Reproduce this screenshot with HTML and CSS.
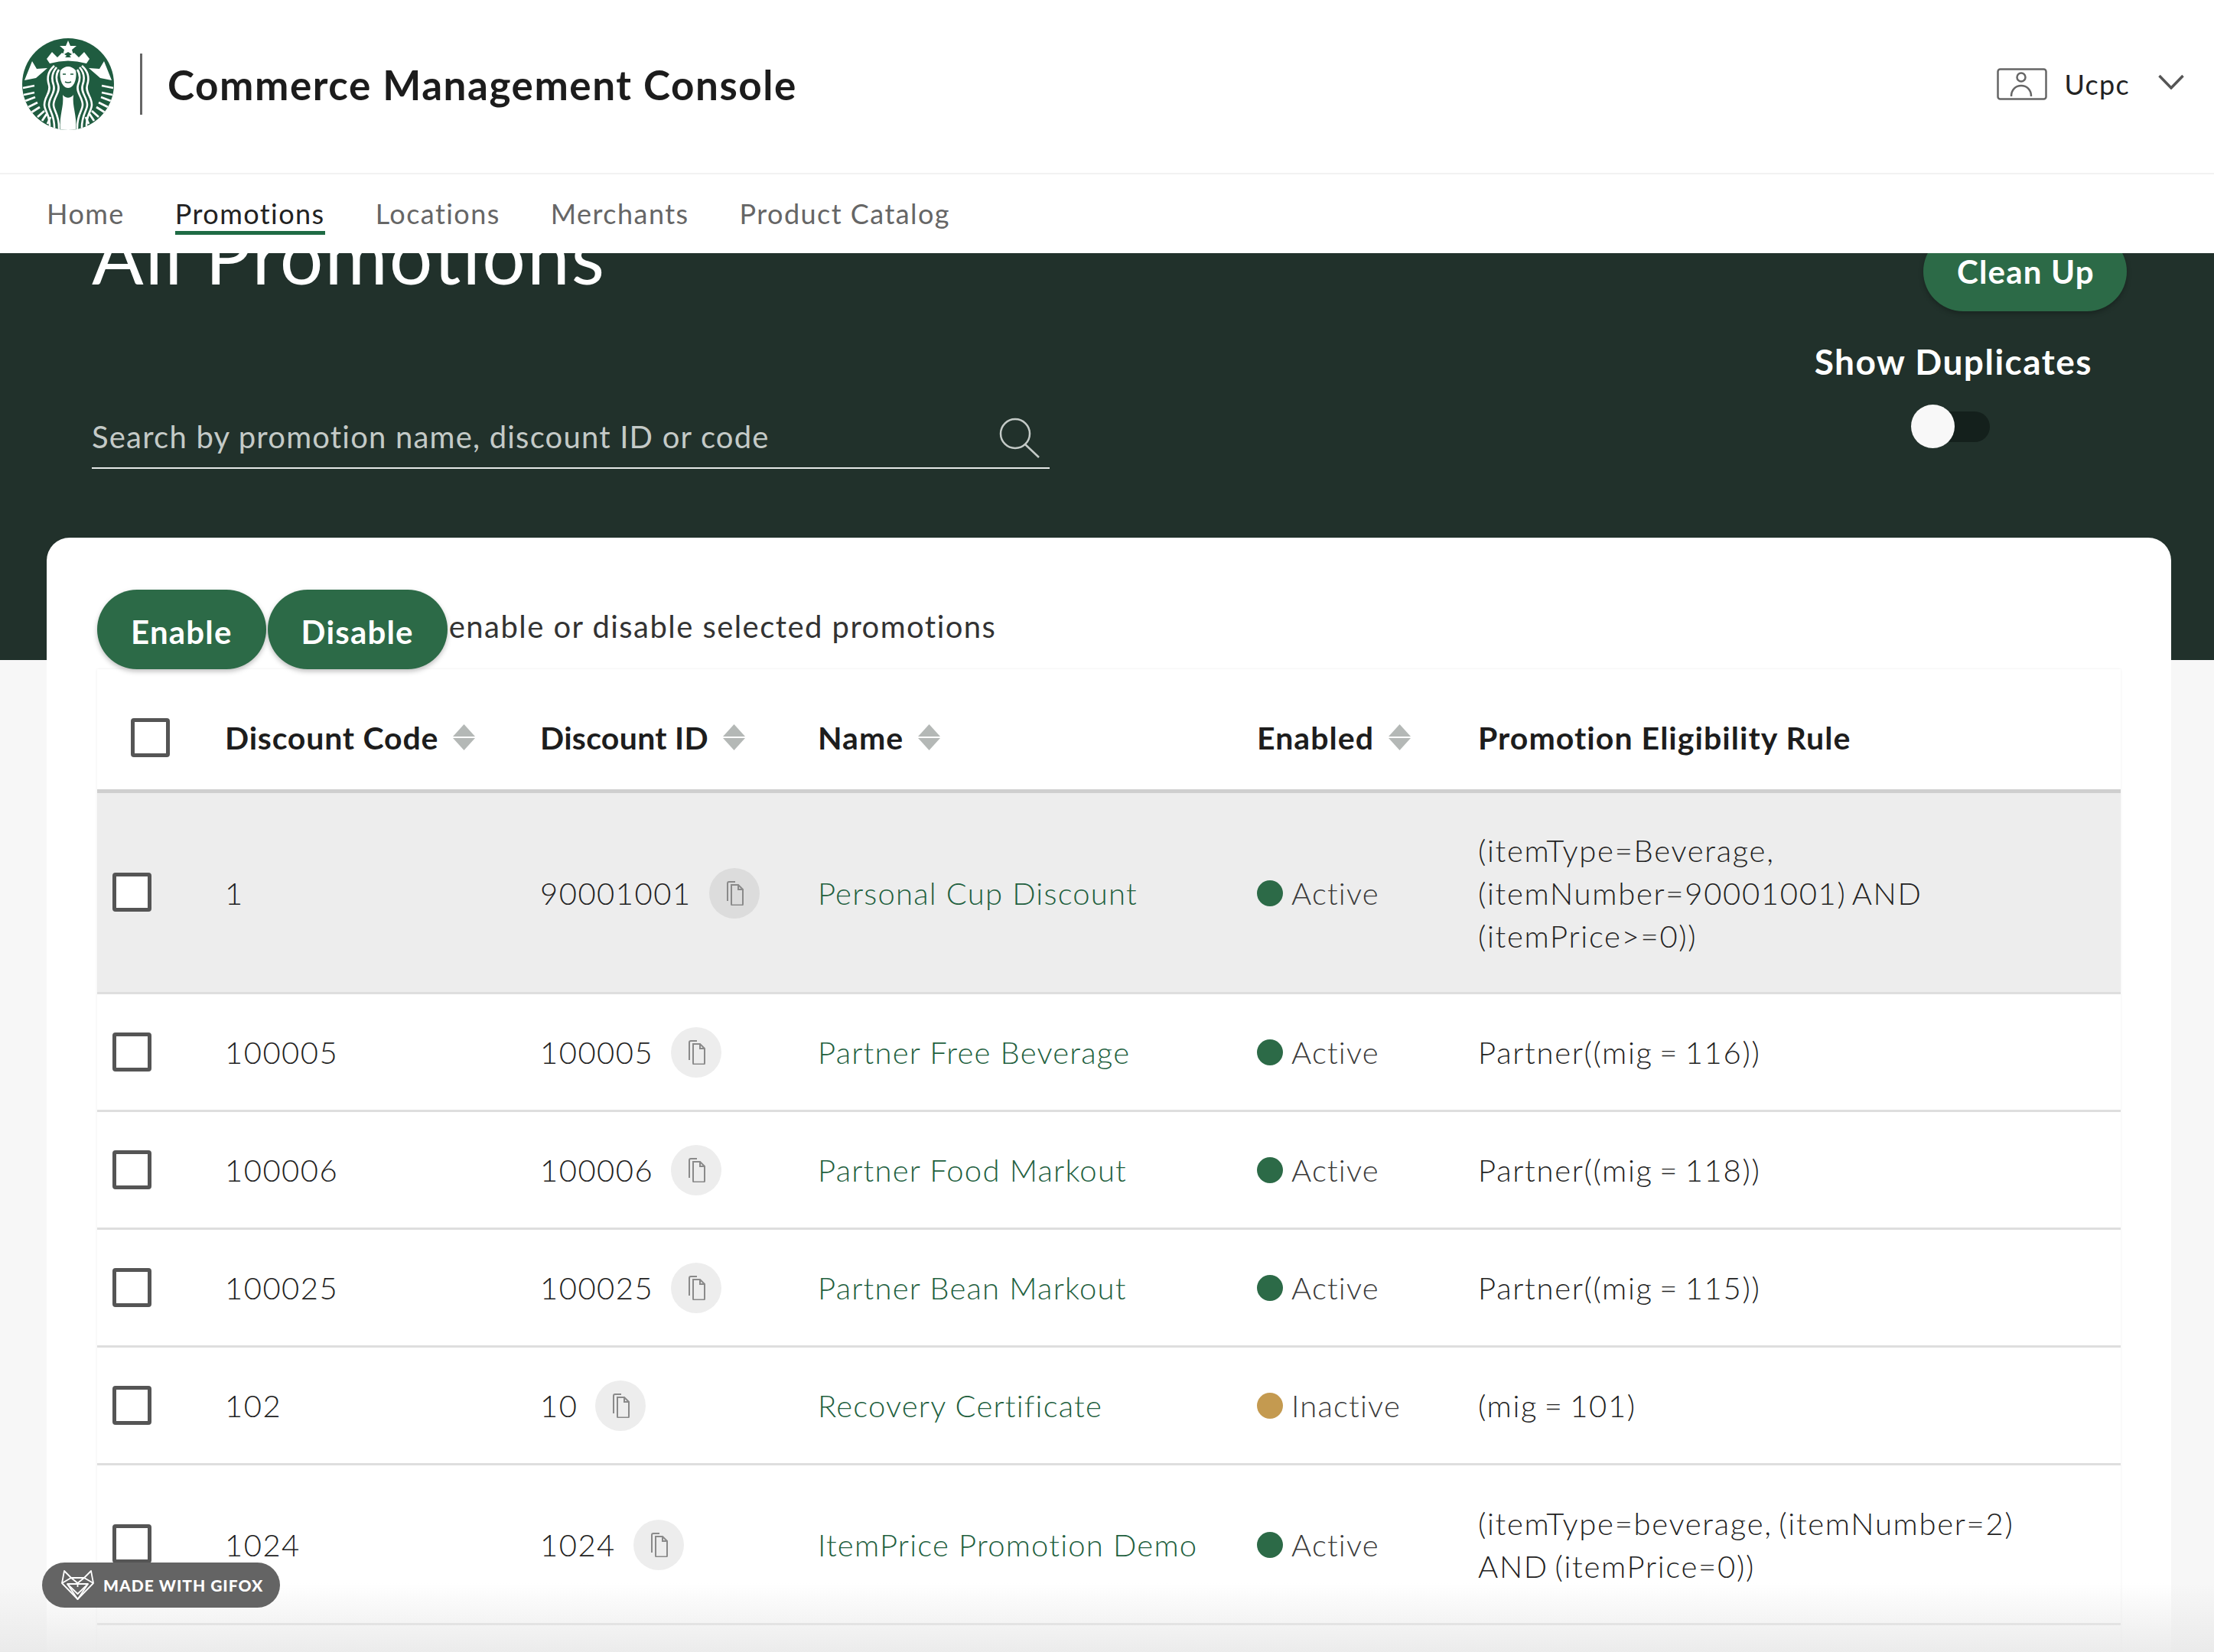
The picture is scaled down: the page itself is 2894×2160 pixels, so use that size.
FILE: index.html
```html
<!DOCTYPE html>
<html lang="en">
<head>
    <meta charset="UTF-8">
    <title>Commerce Management Console</title>
    <link rel="stylesheet" href="styles.css">
</head>
<body>
    <svg class="defs" width="0" height="0">
        <defs>
            <symbol id="sort" viewBox="0 0 29 34">
                <polygon class="sort-up" points="14.5,0 29,16 0,16"/>
                <polygon class="sort-down" points="0,18 29,18 14.5,34"/>
            </symbol>
            <symbol id="copy" viewBox="0 0 24 32">
                <path d="M8 5h9l6 6v19a1.5 1.5 0 0 1-1.500 1.500H9.500A1.500 1.500 0 0 1 8 30z"/>
                <path d="M17 5v6h6"/>
                <path d="M3 26V3a2 2 0 0 1 2-2h8"/>
            </symbol>
        </defs>
    </svg>

    <div class="page">
        <header class="topbar">
            <div class="brand">
                <svg class="logo" viewBox="0 0 120 120">
                    <defs>
                        <clipPath id="logo-clip"><circle cx="60" cy="60" r="60"/></clipPath>
                        <g id="logo-half">
                            <polygon points="13,30 19,40 33,39 18,52 3,55" fill="#fff"/>
                            <g stroke="#fff" stroke-width="2.800" fill="none">
                                <path d="M1 65l15-3M2 74l14-3M4 82l13-5M8 90l12-6M12 97l11-7"/>
                                <path d="M20 103l9-8M26 108l6-9M33 112l4-9"/>
                            </g>
                            <g stroke="#fff" stroke-width="2.600" fill="none">
                                <path d="M42 36C34 43 32 52 35 61C38 71 29 76 29 87C29 95 37 100 36 118"/>
                                <path d="M45 38C39 45 38 53 41 61C44 71 35 77 35 87C35 95 43 100 42 120"/>
                                <path d="M48 41C44 47 44 54 47 61C50 71 41 77 41 87C41 95 49 100 48 120"/>
                            </g>
                        </g>
                    </defs>
                    <circle cx="60" cy="60" r="60" fill="#1f5c40"/>
                    <g clip-path="url(#logo-clip)">
                        <use href="#logo-half"/>
                        <use href="#logo-half" transform="matrix(-1 0 0 1 120 0)"/>
                        <polygon points="60,3 63,10 71,10 65,15 67,22 60,18 53,22 55,15 49,10 57,10" fill="#fff"/>
                        <path d="M32 27L39 18L46 25L52 19L60 24L68 19L74 25L81 18L88 27L84 33Q60 26 36 33Z" fill="#fff"/>
                        <polygon points="60,21 64,25 56,25" fill="#1f5c40"/>
                        <path d="M50 42Q60 32 70 42C72 52 68 65 60 65C52 65 48 52 50 42Z" fill="#fff"/>
                        <path d="M53 47h4M63 47h4M56 57q4 2 8 0" stroke="#1f5c40" stroke-width="1.500" fill="none"/>
                        <path d="M53 74C57 79 63 79 67 74C65 90 72 100 70 120L50 120C48 100 55 90 53 74Z" fill="#fff"/>
                    </g>
                </svg>
                <span class="brand-divider"></span>
                <span class="brand-title">Commerce Management Console</span>
            </div>
            <div class="user">
                <svg class="user-icon" viewBox="0 0 66 42" fill="none" stroke="#666" stroke-width="2.500">
                    <rect x="1.500" y="1.500" width="63" height="39" rx="3"/>
                    <circle cx="32" cy="12" r="5.500"/>
                    <path d="M19 37c0-9 6-14 13-14s13 5 13 14"/>
                </svg>
                <span class="user-name">Ucpc</span>
                <svg class="chevron" viewBox="0 0 34 20" fill="none" stroke="#555" stroke-width="3.500">
                    <path d="M1.500 2L17 18L32.500 2"/>
                </svg>
            </div>
        </header>

        <nav class="tabs">
            <a class="tab">Home</a>
            <a class="tab active">Promotions</a>
            <a class="tab">Locations</a>
            <a class="tab">Merchants</a>
            <a class="tab">Product Catalog</a>
        </nav>

        <section class="hero">
            <div class="hero-inner">
                <div class="hero-left">
                    <h1 class="hero-title">All Promotions</h1>
                    <div class="search">
                        <span class="search-text">Search by promotion name, discount ID or code</span>
                        <svg class="search-icon" viewBox="0 0 54 54" fill="none" stroke="#c4cac7" stroke-width="2.500">
                            <circle cx="21" cy="21" r="19"/>
                            <path d="M34 35L52 52"/>
                        </svg>
                    </div>
                </div>
                <div class="hero-right">
                    <button class="pill clean-up">Clean Up</button>
                    <div class="dup-label">Show Duplicates</div>
                    <div class="toggle"><span class="toggle-knob"></span></div>
                </div>
            </div>
        </section>

        <main class="card">
            <div class="actions">
                <button class="pill">Enable</button>
                <button class="pill">Disable</button>
                <span class="actions-text">enable or disable selected promotions</span>
            </div>

            <table class="promos">
                <colgroup>
                    <col class="col-check">
                    <col class="col-code">
                    <col class="col-id">
                    <col class="col-name">
                    <col class="col-status">
                    <col class="col-rule">
                </colgroup>
                <thead>
                    <tr>
                        <th class="th-check"><span class="checkbox"></span></th>
                        <th class="th-code">Discount Code<svg class="sort-icon sorted"><use href="#sort"/></svg></th>
                        <th class="th-id">Discount ID<svg class="sort-icon"><use href="#sort"/></svg></th>
                        <th>Name<svg class="sort-icon"><use href="#sort"/></svg></th>
                        <th>Enabled<svg class="sort-icon"><use href="#sort"/></svg></th>
                        <th>Promotion Eligibility Rule</th>
                    </tr>
                </thead>
                <tbody>
                    <tr class="hovered tall">
                        <td class="td-check"><span class="checkbox"></span></td>
                        <td class="num">1</td>
                        <td class="num"><div class="id-cell">90001001<span class="copy-btn"><svg class="copy-icon"><use href="#copy"/></svg></span></div></td>
                        <td><a class="promo-link">Personal Cup Discount</a></td>
                        <td><span class="status"><i class="dot"></i>Active</span></td>
                        <td class="rule">(itemType=Beverage, (itemNumber=90001001) AND (itemPrice&gt;=0))</td>
                    </tr>
                    <tr>
                        <td class="td-check"><span class="checkbox"></span></td>
                        <td class="num">100005</td>
                        <td class="num"><div class="id-cell">100005<span class="copy-btn"><svg class="copy-icon"><use href="#copy"/></svg></span></div></td>
                        <td><a class="promo-link">Partner Free Beverage</a></td>
                        <td><span class="status"><i class="dot"></i>Active</span></td>
                        <td class="rule">Partner((mig = 116))</td>
                    </tr>
                    <tr>
                        <td class="td-check"><span class="checkbox"></span></td>
                        <td class="num">100006</td>
                        <td class="num"><div class="id-cell">100006<span class="copy-btn"><svg class="copy-icon"><use href="#copy"/></svg></span></div></td>
                        <td><a class="promo-link">Partner Food Markout</a></td>
                        <td><span class="status"><i class="dot"></i>Active</span></td>
                        <td class="rule">Partner((mig = 118))</td>
                    </tr>
                    <tr>
                        <td class="td-check"><span class="checkbox"></span></td>
                        <td class="num">100025</td>
                        <td class="num"><div class="id-cell">100025<span class="copy-btn"><svg class="copy-icon"><use href="#copy"/></svg></span></div></td>
                        <td><a class="promo-link">Partner Bean Markout</a></td>
                        <td><span class="status"><i class="dot"></i>Active</span></td>
                        <td class="rule">Partner((mig = 115))</td>
                    </tr>
                    <tr>
                        <td class="td-check"><span class="checkbox"></span></td>
                        <td class="num">102</td>
                        <td class="num"><div class="id-cell">10<span class="copy-btn"><svg class="copy-icon"><use href="#copy"/></svg></span></div></td>
                        <td><a class="promo-link">Recovery Certificate</a></td>
                        <td><span class="status"><i class="dot off"></i>Inactive</span></td>
                        <td class="rule">(mig = 101)</td>
                    </tr>
                    <tr class="tall-2">
                        <td class="td-check"><span class="checkbox"></span></td>
                        <td class="num">1024</td>
                        <td class="num"><div class="id-cell">1024<span class="copy-btn"><svg class="copy-icon"><use href="#copy"/></svg></span></div></td>
                        <td><a class="promo-link">ItemPrice Promotion Demo</a></td>
                        <td><span class="status"><i class="dot"></i>Active</span></td>
                        <td class="rule">(itemType=beverage, (itemNumber=2) AND (itemPrice=0))</td>
                    </tr>
                    <tr><td colspan="6"></td></tr>
                </tbody>
            </table>
        </main>

        <div class="fade"></div>

        <div class="gifox">
            <svg class="gifox-icon" viewBox="0 0 43 39" fill="none" stroke="#fff" stroke-width="1.800" stroke-linejoin="round">
                <path d="M4 1L13 10H30L39 1L42 17L21.500 38L1 17Z"/>
                <path d="M1 17L13 10L21.500 17L30 10L42 17M8 18H35L21.500 31Z"/>
                <path d="M21.500 17V22M8 18L21.500 38M35 18L21.500 38"/>
            </svg>
            <span>MADE WITH GIFOX</span>
        </div>
    </div>
</body>
</html>
```

FILE: styles.css
```css
* {
    box-sizing: border-box;
}
html, body {
    margin: 0;
    padding: 0;
}
body {
    font-family: "Lato", "Open Sans", sans-serif;
    color: #2a2a2a;
    background: #f7f7f7;
}
.defs {
    position: absolute;
}
.page {
    position: relative;
    width: 2894px;
    height: 2160px;
    overflow: hidden;
    background: #f7f7f7;
}

/* top bar */
.topbar {
    display: flex;
    align-items: center;
    justify-content: space-between;
    height: 228px;
    padding: 0 39px 6px 29px;
    background: #fff;
    border-bottom: 2px solid #f2f2f2;
}
.brand {
    display: flex;
    align-items: center;
}
.logo {
    width: 120px;
    height: 120px;
}
.brand-divider {
    width: 3px;
    height: 80px;
    margin-left: 34px;
    background: #666;
}
.brand-title {
    margin-left: 33px;
    font-size: 53px;
    font-weight: 700;
    letter-spacing: 1.550px;
    color: #1c1c1c;
    white-space: nowrap;
}
.user {
    display: flex;
    align-items: center;
}
.user-icon {
    width: 66px;
    height: 42px;
}
.user-name {
    margin-left: 22px;
    font-size: 36px;
    letter-spacing: 1.300px;
    color: #222;
}
.chevron {
    width: 34px;
    height: 20px;
    margin-left: 37px;
    margin-bottom: 6px;
}

/* tabs */
.tabs {
    display: flex;
    gap: 66px;
    height: 103px;
    padding: 29px 0 0 61px;
    background: #fff;
}
.tab {
    height: 50px;
    font-size: 36px;
    line-height: 44px;
    letter-spacing: 1.450px;
    color: #666;
    white-space: nowrap;
}
.tab.active {
    color: #222;
    border-bottom: 5px solid #1f6b45;
}

/* dark band */
.hero {
    height: 532px;
    overflow: hidden;
    background: #21312b;
}
.hero-inner {
    display: flex;
    justify-content: space-between;
    margin-top: -28px;
    padding: 0 114px 0 120px;
}
.hero-left {
    width: 1252px;
}
.hero-title {
    margin: -30px 0 0;
    font-size: 100px;
    line-height: 120px;
    font-weight: 400;
    letter-spacing: 2px;
    color: #fff;
}
.search {
    display: flex;
    align-items: center;
    justify-content: space-between;
    height: 68px;
    margin-top: 152px;
    padding: 0 12px 10px 0;
    border-bottom: 2px solid #e6e9e8;
}
.search-text {
    margin-bottom: 4px;
    font-size: 40px;
    letter-spacing: 1.200px;
    color: #c4cac7;
}
.search-icon {
    width: 54px;
    height: 54px;
}
.hero-right {
    display: flex;
    flex-direction: column;
    align-items: flex-end;
}
.clean-up {
    width: 266px;
    padding: 8px 0 0;
    letter-spacing: 1px;
    white-space: nowrap;
    box-shadow: 0 3px 6px rgba(0, 0, 0, 0.2);
}
.dup-label {
    margin: 40px 45px 0 0;
    font-size: 46px;
    line-height: 52px;
    font-weight: 700;
    letter-spacing: 1.500px;
    color: #fff;
}
.toggle {
    position: relative;
    width: 103px;
    height: 40px;
    margin: 39px 179px 0 0;
    background: #14201c;
    border-radius: 20px;
}
.toggle-knob {
    position: absolute;
    left: 0;
    top: -9px;
    width: 57px;
    height: 57px;
    background: #f8f8f8;
    border-radius: 50%;
}

/* buttons */
.pill {
    height: 104px;
    padding: 0 44px;
    border: 0;
    border-radius: 52px;
    background: #2c6a47;
    color: #fff;
    font-family: inherit;
    font-size: 42px;
    font-weight: 700;
    letter-spacing: 1.200px;
    box-shadow: 0 3px 6px rgba(0, 0, 0, 0.25);
}

/* card + table */
.card {
    position: relative;
    margin: -160px 56px 0 61px;
    padding: 68px 66px 0;
    background: #fff;
    border-radius: 30px 30px 0 0;
}
.actions {
    display: flex;
    align-items: flex-start;
    gap: 2px;
}
.actions .pill {
    padding-top: 6px;
}
.actions-text {
    margin-top: 20px;
    font-size: 40px;
    line-height: 56px;
    letter-spacing: 1.450px;
    color: #333;
}
.promos {
    width: 2645px;
    table-layout: fixed;
    border-collapse: collapse;
    box-shadow: 0 0 3px rgba(0, 0, 0, 0.08);
}
.col-check { width: 167px; }
.col-code { width: 412px; }
.col-id { width: 363px; }
.col-name { width: 574px; }
.col-status { width: 289px; }
.promos th {
    height: 159px;
    padding: 22px 0 0;
    border-bottom: 5px solid #cfcfcf;
    font-size: 41px;
    font-weight: 700;
    letter-spacing: 1.050px;
    text-align: left;
    color: #1d1d1d;
    white-space: nowrap;
}
.promos th.th-code {
    letter-spacing: 0.800px;
}
.promos th.th-id {
    letter-spacing: 0.300px;
}
.sort-icon {
    width: 29px;
    height: 34px;
    margin-left: 19px;
    vertical-align: -1px;
}
.sort-up, .sort-down {
    fill: #b4b8b6;
}
.sorted .sort-up {
    fill: #6a6a6a;
}
.promos td {
    height: 154px;
    padding: 2px 0 0;
    border-bottom: 3px solid #dedede;
    font-size: 40px;
    font-weight: 300;
    line-height: 56px;
    letter-spacing: 1.200px;
    color: #222;
}
.promos td.num {
    letter-spacing: 1.500px;
}
.promos tr.tall td {
    height: 264px;
}
.promos tr.tall-2 td {
    height: 209px;
}
.hovered td {
    background: #ededed;
}
.promos th.th-check {
    padding-left: 44px;
}
.promos td.td-check {
    padding: 0 0 0 20px;
}
.checkbox {
    display: block;
    width: 51px;
    height: 51px;
    background: #fff;
    border: 5px solid #555;
    border-radius: 4px;
}
.id-cell {
    display: flex;
    align-items: center;
    gap: 23px;
}
.copy-btn {
    display: flex;
    align-items: center;
    justify-content: center;
    width: 66px;
    height: 66px;
    background: #ededed;
    border-radius: 50%;
}
.hovered .copy-btn {
    background: #dcdcdc;
}
.copy-icon {
    width: 24px;
    height: 32px;
    fill: none;
    stroke: #8a8a8a;
    stroke-width: 2;
}
.promo-link {
    color: #22603e;
}
.status {
    display: flex;
    align-items: center;
    gap: 11px;
    color: #3a3a3a;
}
.dot {
    width: 34px;
    height: 34px;
    background: #2c6a47;
    border-radius: 50%;
}
.dot.off {
    background: #c49a50;
}
.promos td.rule {
    padding-right: 70px;
    letter-spacing: 1.700px;
    word-spacing: -4px;
}

/* overlays */
.fade {
    position: absolute;
    left: 0;
    right: 0;
    bottom: 0;
    height: 90px;
    background: linear-gradient(to bottom, rgba(232, 232, 232, 0), rgba(232, 232, 232, 0.85));
}
.gifox {
    position: absolute;
    left: 55px;
    top: 2043px;
    display: flex;
    align-items: center;
    gap: 12px;
    width: 311px;
    height: 59px;
    padding-left: 25px;
    background: #646464;
    border-radius: 30px;
    color: #fff;
    font-size: 21px;
    font-weight: 900;
    letter-spacing: 1px;
}
.gifox-icon {
    width: 43px;
    height: 39px;
}
```
